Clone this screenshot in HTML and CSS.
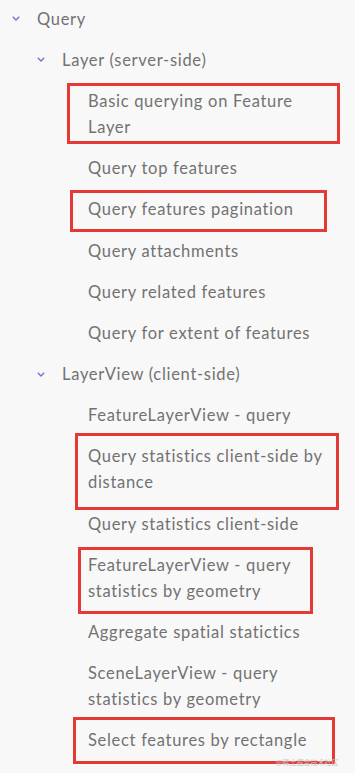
FILE: index.html
```html
<!DOCTYPE html>
<html lang="en">
<head>
<meta charset="utf-8">
<title>Query samples</title>
<link rel="stylesheet" href="styles.css">
</head>
<body>
<nav class="tree">
  <div class="group">
    <div class="row level0"><svg class="chev" viewBox="0 0 8 5"><path d="M0.8 0.8 L4 4 L7.2 0.8"/></svg><span>Query</span></div>
    <div class="group">
      <div class="row level1"><svg class="chev" viewBox="0 0 8 5"><path d="M0.8 0.8 L4 4 L7.2 0.8"/></svg><span>Layer (server-side)</span></div>
      <ul class="items">
        <li>Basic querying on Feature Layer</li>
        <li>Query top features</li>
        <li>Query features pagination</li>
        <li>Query attachments</li>
        <li>Query related features</li>
        <li>Query for extent of features</li>
      </ul>
    </div>
    <div class="group">
      <div class="row level1"><svg class="chev" viewBox="0 0 8 5"><path d="M0.8 0.8 L4 4 L7.2 0.8"/></svg><span>LayerView (client-side)</span></div>
      <ul class="items">
        <li>FeatureLayerView - query</li>
        <li>Query statistics client-side by distance</li>
        <li>Query statistics client-side</li>
        <li>FeatureLayerView - query statistics by geometry</li>
        <li>Aggregate spatial statictics</li>
        <li>SceneLayerView - query statistics by geometry</li>
        <li>Select features by rectangle</li>
      </ul>
    </div>
  </div>
</nav>
<div class="mark m1"></div>
<div class="mark m2"></div>
<div class="mark m3"></div>
<div class="mark m4"></div>
<div class="mark m5"></div>
<div class="watermark">@稀土掘金技术社区</div>
</body>
</html>
```
FILE: styles.css
```css
html, body {
  margin: 0;
  padding: 0;
  background: #f8f8f8;
}
body {
  width: 355px;
  height: 773px;
  overflow: hidden;
  position: relative;
  font-family: Lato, "Open Sans", sans-serif;
  font-size: 16.5px;
  letter-spacing: 0.7px;
  color: #727272;
}
.tree {
  margin-top: -2px;
}
.row {
  display: flex;
  align-items: center;
  line-height: 26px;
  padding: 7.6px 0;
}
.row.level0 {
  padding-left: 12px;
}
.row.level1 {
  padding-left: 37px;
}
.chev {
  width: 8px;
  height: 5px;
  margin-right: 17px;
  fill: none;
  stroke: #7c6bcc;
  stroke-width: 1.3;
}
.items {
  list-style: none;
  margin: 0;
  padding: 0 0 0 88px;
}
.items li {
  line-height: 26px;
  padding: 7.6px 0;
  max-width: 246px;
}
.mark {
  position: absolute;
  border: 3px solid #e53935;
  box-sizing: border-box;
}
.m1 { left: 67px; top: 83px; width: 273px; height: 61px; }
.m2 { left: 70px; top: 190px; width: 257px; height: 42px; }
.m3 { left: 75px; top: 433px; width: 264px; height: 77px; }
.m4 { left: 78px; top: 547px; width: 235px; height: 67px; }
.m5 { left: 73px; top: 717px; width: 262px; height: 47px; }
.watermark {
  position: absolute;
  left: 276px;
  top: 757px;
  font-family: "Noto Sans CJK SC", sans-serif;
  font-size: 7px;
  letter-spacing: 0;
  color: #c4c4c4;
}
```
